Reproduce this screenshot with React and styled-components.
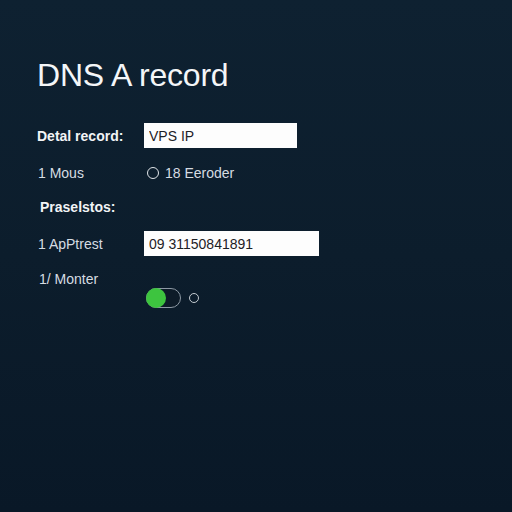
import React from 'react';
import styled, { createGlobalStyle } from 'styled-components';

const GlobalStyle = createGlobalStyle`
  html, body {
    margin: 0;
    padding: 0;
    height: 100%;
  }
  body {
    font-family: "Liberation Sans", Arial, sans-serif;
  }
  #root {
    min-height: 100vh;
  }
`;

const Page = styled.div`
  min-height: 100vh;
  box-sizing: border-box;
  background: linear-gradient(180deg, #0e2131 0%, #0c1d2c 50%, #091827 100%);
  padding: 58px 0 0 37px;
  color: #e8edf1;
`;

const Title = styled.h1`
  margin: 0 0 31px;
  font-size: 32px;
  font-weight: 400;
  line-height: 34px;
  color: #f4f6f8;
  letter-spacing: -0.2px;
`;

const Form = styled.div`
  display: flex;
  flex-direction: column;
`;

const Row = styled.div`
  display: grid;
  grid-template-columns: 107px auto;
  align-items: center;
  min-height: ${p => p.$height || 25}px;
  margin-bottom: ${p => p.$gap || 0}px;
`;

const Label = styled.div`
  font-size: 14px;
  font-weight: ${p => (p.$bold ? 700 : 400)};
  color: ${p => (p.$bold ? '#f2f4f6' : '#d6dce2')};
  padding-left: ${p => p.$indent || 0}px;
`;

const TextField = styled.input`
  box-sizing: border-box;
  width: ${p => p.$width}px;
  height: 25px;
  border: none;
  background: #fdfdfd;
  padding: 0 5px;
  font-family: "Liberation Sans", Arial, sans-serif;
  font-size: 14px;
  color: #1d2126;
  outline: none;
`;

const RadioOption = styled.label`
  display: flex;
  align-items: center;
  gap: 6px;
  font-size: 14px;
  color: #d6dce2;
  padding-left: 3px;
`;

const RadioDot = styled.span`
  width: 10px;
  height: 10px;
  border: 1.5px solid #dfe4e8;
  border-radius: 50%;
`;

const ToggleRow = styled.div`
  display: flex;
  align-items: center;
  gap: 8px;
  padding-left: 109px;
`;

const Toggle = styled.div`
  position: relative;
  width: 35px;
  height: 20px;
  box-sizing: border-box;
  border: 1.5px solid #8d99a4;
  border-radius: 10px;
  background: #0d1b28;
`;

const Knob = styled.span`
  position: absolute;
  left: -1.5px;
  top: -1.5px;
  width: 20px;
  height: 20px;
  border-radius: 50%;
  background: #3dc43f;
`;

const SmallRing = styled.span`
  width: 8px;
  height: 8px;
  border: 1.5px solid #c3cad0;
  border-radius: 50%;
`;

export default function App() {
  return (
    <>
      <GlobalStyle />
      <Page>
        <Title>DNS A record</Title>
        <Form>
          <Row $gap={12}>
            <Label $bold>Detal record:</Label>
            <TextField $width={153} defaultValue="VPS IP" />
          </Row>
          <Row $gap={9}>
            <Label $indent={1}>1 Mous</Label>
            <RadioOption>
              <RadioDot />
              18 Eeroder
            </RadioOption>
          </Row>
          <Row $gap={12}>
            <Label $bold $indent={3}>Praselstos:</Label>
          </Row>
          <Row $gap={13}>
            <Label $indent={1}>1 ApPtrest</Label>
            <TextField $width={175} defaultValue="09 31150841891" />
          </Row>
          <Row $height={19}>
            <Label $indent={2}>1/ Monter</Label>
          </Row>
          <ToggleRow>
            <Toggle>
              <Knob />
            </Toggle>
            <SmallRing />
          </ToggleRow>
        </Form>
      </Page>
    </>
  );
}
